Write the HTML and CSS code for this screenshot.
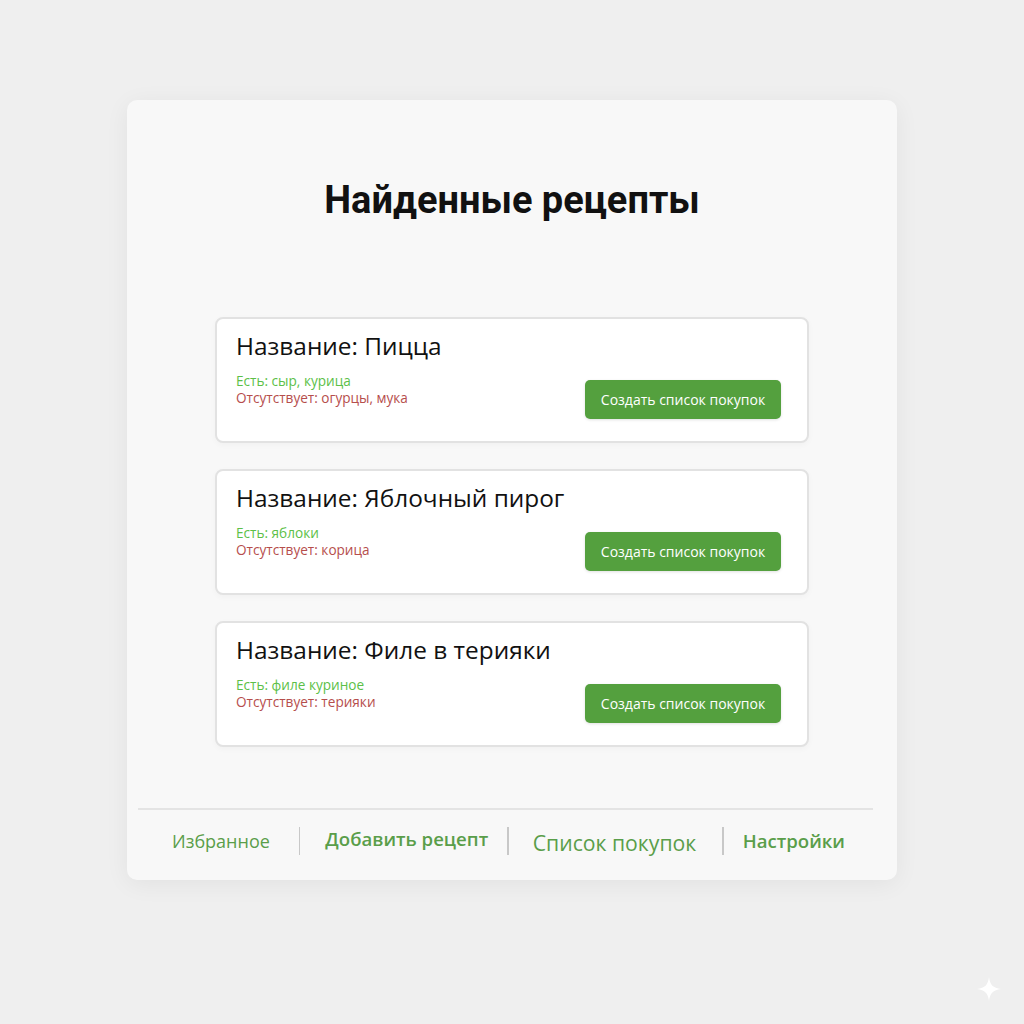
FILE: index.html
```html
<!DOCTYPE html>
<html lang="ru">
<head>
<meta charset="utf-8">
<title>Найденные рецепты</title>
<link rel="stylesheet" href="styles.css">
</head>
<body>
<main class="panel">
  <h1 class="title">Найденные рецепты</h1>
  <section class="cards">
    <article class="card">
      <h2 class="card-title">Название: Пицца</h2>
      <div class="card-row">
        <div class="info">
          <p class="have">Есть: сыр, курица</p>
          <p class="missing">Отсутствует: огурцы, мука</p>
        </div>
        <button class="btn">Создать список покупок</button>
      </div>
    </article>
    <article class="card">
      <h2 class="card-title">Название: Яблочный пирог</h2>
      <div class="card-row">
        <div class="info">
          <p class="have">Есть: яблоки</p>
          <p class="missing">Отсутствует: корица</p>
        </div>
        <button class="btn">Создать список покупок</button>
      </div>
    </article>
    <article class="card">
      <h2 class="card-title">Название: Филе в терияки</h2>
      <div class="card-row">
        <div class="info">
          <p class="have">Есть: филе куриное</p>
          <p class="missing">Отсутствует: терияки</p>
        </div>
        <button class="btn">Создать список покупок</button>
      </div>
    </article>
  </section>
  <nav class="nav">
    <a class="nav-item">Избранное</a>
    <span class="sep"></span>
    <a class="nav-item bold add">Добавить рецепт</a>
    <span class="sep"></span>
    <a class="nav-item big">Список покупок</a>
    <span class="sep"></span>
    <a class="nav-item bold settings">Настройки</a>
  </nav>
</main>
<svg class="sparkle" width="24" height="24" viewBox="0 0 24 24"><path d="M12 0 C13 8 16 11 24 12 C16 13 13 16 12 24 C11 16 8 13 0 12 C8 11 11 8 12 0 Z" fill="#ffffff"/></svg>
</body>
</html>
```
FILE: styles.css
```css
html, body {
  margin: 0;
  padding: 0;
}
body {
  background: #efefef;
  width: 1024px;
  height: 1024px;
  position: relative;
  overflow: hidden;
  font-family: "Open Sans", "Noto Sans", sans-serif;
}
.panel {
  width: 770px;
  height: 780px;
  margin: 100px auto 0;
  background: #f8f8f8;
  border-radius: 10px;
  box-shadow: 0 4px 24px rgba(0,0,0,0.06);
  display: flex;
  flex-direction: column;
  box-sizing: border-box;
}
.title {
  margin: 77px 0 0;
  text-align: center;
  font-family: Roboto, "Liberation Sans", sans-serif;
  font-weight: 700;
  font-size: 38px;
  line-height: 46px;
  color: #111;
}
.cards {
  width: 594px;
  margin: 94px auto 0;
  display: flex;
  flex-direction: column;
  gap: 26px;
}
.card {
  background: #fff;
  border: 2px solid #e2e2e2;
  border-radius: 8px;
  height: 126px;
  box-sizing: border-box;
  padding: 10px 26px 0 19px;
  box-shadow: 0 2px 6px rgba(0,0,0,0.03);
}
.card-title {
  margin: 0;
  font-weight: 400;
  font-size: 24.4px;
  line-height: 34px;
  color: #111;
}
.card-row {
  display: flex;
  justify-content: space-between;
  align-items: flex-start;
  margin-top: 9px;
}
.info p {
  margin: 0;
  font-size: 13.6px;
  line-height: 17px;
}
.have { color: #5cbf48; }
.missing { color: #b64e4c; }
.btn {
  width: 196px;
  height: 39px;
  border: none;
  border-radius: 5px;
  background: #54a03e;
  color: #fff;
  font-family: "Open Sans", "Noto Sans", sans-serif;
  font-size: 14px;
  margin-top: 8px;
  box-shadow: 0 1px 3px rgba(0,0,0,0.12);
}
.nav {
  margin: auto 24px 0 11px;
  border-top: 2px solid #e4e4e4;
  height: 72px;
  display: flex;
  align-items: center;
  padding: 0 0 8px 34px;
  box-sizing: border-box;
}
.nav-item {
  color: #5a9e4a;
  font-size: 18px;
  line-height: 24px;
}
.nav-item.bold { font-weight: 600; }
.nav-item.add { font-size: 18.6px; margin: -4px 19px 0 25px; }
.nav-item.big { font-size: 21.2px; margin: 3px 26px 0 24px; }
.nav-item.settings { font-size: 18.6px; margin: -1px 0 0 19px; }
.sep {
  width: 1.5px;
  height: 28px;
  margin-left: 29px;
  background: #c8c8c8;
}
.nav-item.add + .sep,
.nav-item.big + .sep { margin-left: 0; }
.sparkle {
  position: absolute;
  left: 977px;
  top: 977px;
}
```
